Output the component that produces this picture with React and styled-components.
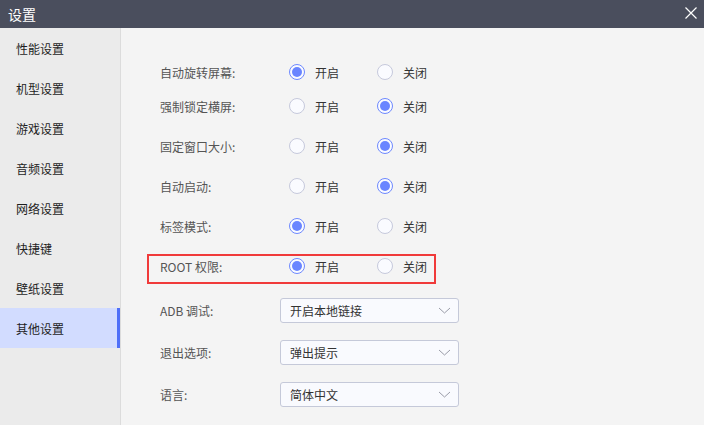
import React, { useState } from "react";
import styled, { createGlobalStyle } from "styled-components";

const Global = createGlobalStyle`
  html, body { margin: 0; padding: 0; background: #f4f4f4; }
  body { font-family: "Noto Sans CJK SC", "Noto Sans", sans-serif; overflow: hidden; }
  * { box-sizing: border-box; }
`;

const Window = styled.div`
  width: 704px;
  height: 425px;
  display: flex;
  flex-direction: column;
  background: #f4f4f4;
`;

const TitleBar = styled.div`
  height: 28px;
  flex: none;
  background: #4a4e5d;
  display: flex;
  align-items: center;
  justify-content: space-between;
  padding: 0 4px 0 8px;
  color: #fff;
  font-size: 14px;
`;

const CloseBtn = styled.div`
  width: 19px;
  height: 22px;
  display: flex;
  align-items: center;
  justify-content: center;
  margin-top: -2px;
`;

const Body = styled.div`
  flex: 1;
  display: flex;
  min-height: 0;
`;

const Sidebar = styled.div`
  width: 121px;
  flex: none;
  background: #ebebeb;
  border-right: 1px solid #dcdcdc;
  display: flex;
  flex-direction: column;
`;

const NavItem = styled.div`
  height: 40px;
  display: flex;
  align-items: center;
  padding-left: 16px;
  font-size: 12px;
  color: #1e1e1e;
  background: ${(p) => (p.$active ? "#d2dcff" : "transparent")};
  box-shadow: ${(p) => (p.$active ? "inset -3px 0 0 #4f6ff8" : "none")};
`;

const Content = styled.div`
  flex: 1;
  padding: 32px 0 0 26px;
  display: flex;
  flex-direction: column;
`;

const RadioGroup = styled.div`
  display: flex;
  flex-direction: column;
  gap: 10px;
`;

const Row = styled.div`
  width: 289px;
  height: 30px;
  display: flex;
  align-items: center;
  padding: 0 0 6px 11px;
  border: 2px solid ${(p) => (p.$highlight ? "#f03a3a" : "transparent")};
  &:first-child { margin-bottom: -6px; }
`;

const Label = styled.div`
  width: ${(p) => p.$w}px;
  flex: none;
  font-size: 12px;
  color: #555;
  white-space: nowrap;
`;

const Option = styled.label`
  width: 88px;
  flex: none;
  display: flex;
  align-items: center;
  gap: 10px;
  font-size: 12px;
  color: #333;
  cursor: pointer;
`;

const Circle = styled.span`
  width: 16px;
  height: 16px;
  border-radius: 50%;
  flex: none;
  background: #fafbff;
  border: 1.5px solid ${(p) => (p.$on ? "#6d88ff" : "#c6c9dc")};
  display: flex;
  align-items: center;
  justify-content: center;
  &::after {
    content: "";
    width: 10px;
    height: 10px;
    border-radius: 50%;
    background: #6a85ff;
    display: ${(p) => (p.$on ? "block" : "none")};
  }
`;

const SelectGroup = styled.div`
  margin-top: 14px;
  display: flex;
  flex-direction: column;
  gap: 17px;
`;

const SelectRow = styled.div`
  display: flex;
  align-items: center;
  padding-left: 13px;
  height: 25px;
`;

const Select = styled.div`
  width: 179px;
  height: 25px;
  border: 1px solid #c5c9d9;
  border-radius: 3px;
  background: #f9fafe;
  display: flex;
  align-items: center;
  justify-content: space-between;
  padding: 0 7px 0 9px;
  font-size: 12px;
  color: #333;
`;

const radioRows = [
  { label: "自动旋转屏幕:", on: true },
  { label: "强制锁定横屏:", on: false },
  { label: "固定窗口大小:", on: false },
  { label: "自动启动:", on: false },
  { label: "标签模式:", on: true },
  { label: "ROOT 权限:", on: true, highlight: true },
];

const selectRows = [
  { label: "ADB 调试:", value: "开启本地链接" },
  { label: "退出选项:", value: "弹出提示" },
  { label: "语言:", value: "简体中文" },
];

const nav = ["性能设置", "机型设置", "游戏设置", "音频设置", "网络设置", "快捷键", "壁纸设置", "其他设置"];

const Chevron = () => (
  <svg width="13" height="7" viewBox="0 0 13 7">
    <path d="M1 1 L6.5 6 L12 1" fill="none" stroke="#9a9ca8" strokeWidth="1" />
  </svg>
);

export default function App() {
  const [vals, setVals] = useState(radioRows.map((r) => r.on));
  return (
    <Window>
      <Global />
      <TitleBar>
        <span>设置</span>
        <CloseBtn>
          <svg width="12" height="12" viewBox="0 0 12 12">
            <path d="M0.5 0.5 L11.5 11.5 M11.5 0.5 L0.5 11.5" stroke="#fff" strokeWidth="1.2" />
          </svg>
        </CloseBtn>
      </TitleBar>
      <Body>
        <Sidebar>
          {nav.map((n) => (
            <NavItem key={n} $active={n === "其他设置"}>{n}</NavItem>
          ))}
        </Sidebar>
        <Content>
          <RadioGroup>
            {radioRows.map((r, i) => (
              <Row key={r.label} $highlight={r.highlight}>
                <Label $w={129}>{r.label}</Label>
                <Option onClick={() => setVals(vals.map((v, j) => (j === i ? true : v)))}>
                  <Circle $on={vals[i]} />
                  开启
                </Option>
                <Option onClick={() => setVals(vals.map((v, j) => (j === i ? false : v)))}>
                  <Circle $on={!vals[i]} />
                  关闭
                </Option>
              </Row>
            ))}
          </RadioGroup>
          <SelectGroup>
            {selectRows.map((s) => (
              <SelectRow key={s.label}>
                <Label $w={120}>{s.label}</Label>
                <Select>
                  <span>{s.value}</span>
                  <Chevron />
                </Select>
              </SelectRow>
            ))}
          </SelectGroup>
        </Content>
      </Body>
    </Window>
  );
}
